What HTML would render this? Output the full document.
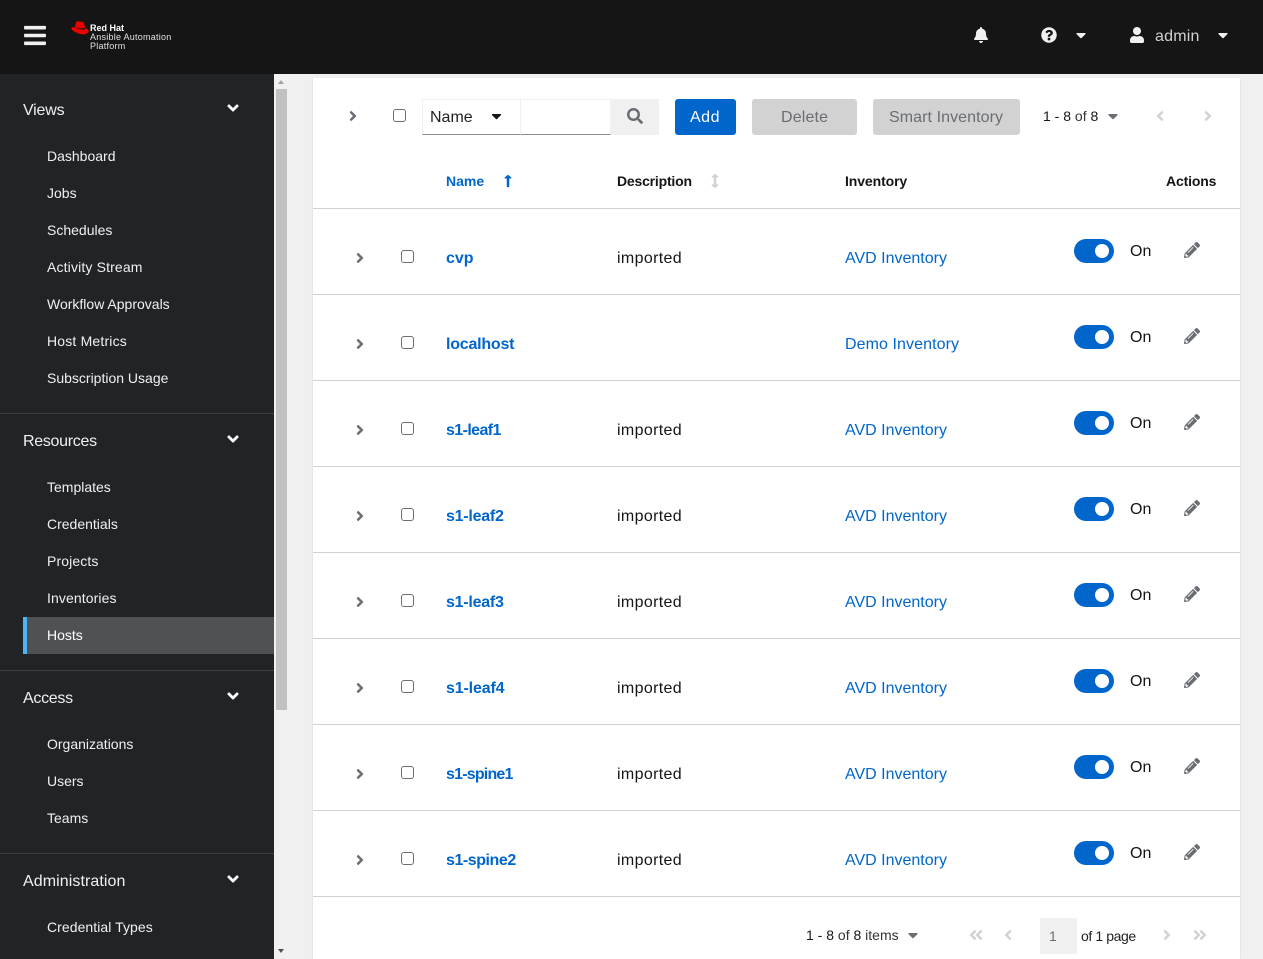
<!DOCTYPE html>
<html><head><meta charset="utf-8"><title>Hosts</title>
<style>
*{box-sizing:border-box}
html,body{margin:0;padding:0;width:1263px;height:959px;overflow:hidden;background:#f0f0f0;font-family:"Liberation Sans",sans-serif;color:#151515}
.t{position:absolute;white-space:nowrap;line-height:20px;font-size:16px}
.b{position:absolute}
svg.i{position:absolute;display:block;fill:currentColor}
a{color:#06c;text-decoration:none}
.s{color:#f0f0f0;font-size:14px;left:47px}
.h{color:#f0f0f0;font-size:16px;left:23px}
.l{font-weight:bold;color:#06c;left:446px}
.d{left:617px;letter-spacing:.35px}
.v{left:845px;color:#06c}
.on{left:1130px}
.line{position:absolute;left:313px;width:927px;height:1px;background:#d2d2d2}
.sd{position:absolute;left:0;width:274px;height:1px;background:#3c3f42}
.cb{position:absolute;width:13px;height:13px;border:1px solid #6a6e73;border-radius:3px;background:#fff}
.sw{position:absolute;left:1074px;width:40px;height:24px;border-radius:12px;background:#06c}
.sw i{position:absolute;left:21px;top:5px;width:14px;height:14px;border-radius:50%;background:#fff}
</style></head><body>
<svg width="0" height="0" style="position:absolute"><defs>
<symbol id="ar" viewBox="0 0 256 512"><path d="M224.3 273l-136 136c-9.4 9.4-24.6 9.4-33.9 0l-22.6-22.6c-9.4-9.4-9.4-24.6 0-33.9l96.4-96.4-96.4-96.4c-9.4-9.4-9.4-24.6 0-33.9L54.3 103c9.4-9.4 24.6-9.4 33.9 0l136 136c9.5 9.4 9.5 24.6.1 34z"/></symbol>
<symbol id="al" viewBox="0 0 256 512"><path d="M31.7 239l136-136c9.4-9.4 24.6-9.4 33.9 0l22.6 22.6c9.4 9.4 9.4 24.6 0 33.9L127.9 256l96.4 96.4c9.4 9.4 9.4 24.6 0 33.9L201.7 409c-9.4 9.4-24.6 9.4-33.9 0l-136-136c-9.5-9.4-9.5-24.6-.1-34z"/></symbol>
<symbol id="ad" viewBox="0 0 320 512"><path d="M143 352.3L7 216.3c-9.4-9.4-9.4-24.6 0-33.9l22.6-22.6c9.4-9.4 24.6-9.4 33.9 0l96.4 96.4 96.4-96.4c9.4-9.4 24.6-9.4 33.9 0l22.6 22.6c9.4 9.4 9.4 24.6 0 33.9l-136 136c-9.2 9.4-24.4 9.4-33.8 0z"/></symbol>
<symbol id="cd" viewBox="0 0 320 512"><path d="M31.3 192h257.3c17.8 0 26.7 21.5 14.1 34.1L174.1 354.8c-7.8 7.8-20.5 7.8-28.3 0L17.2 226.1C4.6 213.5 13.5 192 31.3 192z"/></symbol>
<symbol id="pen" viewBox="0 0 512 512"><path d="M497.9 142.1l-46.1 46.1c-4.7 4.7-12.3 4.7-17 0l-111-111c-4.7-4.7-4.7-12.3 0-17l46.1-46.1c18.7-18.7 49.1-18.7 67.9 0l60.1 60.1c18.8 18.7 18.8 49.1 0 67.9zM284.2 99.8L21.6 362.4.4 483.9c-2.9 16.4 11.4 30.6 27.8 27.8l121.5-21.3 262.6-262.6c4.7-4.7 4.7-12.3 0-17l-111-111c-4.8-4.7-12.4-4.7-17.1 0zM124.1 339.9c-5.5-5.5-5.5-14.3 0-19.8l154-154c5.5-5.5 14.3-5.5 19.8 0s5.5 14.3 0 19.8l-154 154c-5.5 5.5-14.3 5.5-19.8 0zM88 424h48v36.3l-64.5 11.3-31.1-31.1L51.7 376H88v48z"/></symbol>
<symbol id="dl" viewBox="0 0 448 512"><path d="M223.7 239l136-136c9.4-9.4 24.6-9.4 33.9 0l22.6 22.6c9.4 9.4 9.4 24.6 0 33.9L319.9 256l96.4 96.4c9.4 9.4 9.4 24.6 0 33.9L393.7 409c-9.4 9.4-24.6 9.4-33.9 0l-136-136c-9.5-9.4-9.5-24.6-.1-34zm-192 34l136 136c9.4 9.4 24.6 9.4 33.9 0l22.6-22.6c9.4-9.4 9.4-24.6 0-33.9L127.9 256l96.4-96.4c9.4-9.4 9.4-24.6 0-33.9L201.7 103c-9.4-9.4-24.6-9.4-33.9 0l-136 136c-9.5 9.4-9.5 24.6-.1 34z"/></symbol>
<symbol id="dr" viewBox="0 0 448 512"><path d="M224.3 273l-136 136c-9.4 9.4-24.6 9.4-33.9 0l-22.6-22.6c-9.4-9.4-9.4-24.6 0-33.9l96.4-96.4-96.4-96.4c-9.4-9.4-9.4-24.6 0-33.9L54.3 103c9.4-9.4 24.6-9.4 33.9 0l136 136c9.5 9.4 9.5 24.6.1 34zm192-34l-136-136c-9.4-9.4-24.6-9.4-33.9 0l-22.6 22.6c-9.4 9.4-9.4 24.6 0 33.9l96.4 96.4-96.4 96.4c-9.4 9.4-9.4 24.6 0 33.9l22.6 22.6c9.4 9.4 24.6 9.4 33.9 0l136-136c9.4-9.2 9.4-24.4 0-33.8z"/></symbol>
</defs></svg>

<!-- header -->
<div class="b" style="left:0;top:0;width:1263px;height:74px;background:#151515"></div>
<svg class="i" style="left:24px;top:23px;color:#f0f0f0" width="22" height="25" viewBox="0 0 448 512"><path d="M16 132h416c8.837 0 16-7.163 16-16V76c0-8.837-7.163-16-16-16H16C7.163 60 0 67.163 0 76v40c0 8.837 7.163 16 16 16zm0 160h416c8.837 0 16-7.163 16-16v-40c0-8.837-7.163-16-16-16H16c-8.837 0-16 7.163-16 16v40c0 8.837 7.163 16 16 16zm0 160h416c8.837 0 16-7.163 16-16v-40c0-8.837-7.163-16-16-16H16c-8.837 0-16 7.163-16 16v40c0 8.837 7.163 16 16 16z"/></svg>
<svg class="i" style="left:71px;top:20.500px" width="18" height="14" viewBox="0 0 18 14"><path fill="#e00" d="M5 1.500C5.500.5 6.500 0 8 .4 9 .7 9.500.8 10 .7 11.500.3 12.500.8 12.800 2L14.200 6.500C11 8 7 7.500 4 6z"/><path fill="#e00" d="M3.500 6C3 6 .5 6 .3 7.500.2 9 4 11 7 12.300 9 13.200 11.500 13.600 13.500 13.300 16 13 17.800 11.500 17.500 9.500 17.300 8.500 16 7.500 14.500 7 14.700 7.800 14 8.500 12.500 8.600 9.500 8.800 5.500 7.500 3.500 6z"/></svg>
<span class="t" style="left:90px;top:23px;font-size:9px;line-height:10px;font-weight:bold;color:#fff">Red Hat</span>
<span class="t" style="left:90px;top:32px;font-size:9px;line-height:10px;color:#e0e0e0;letter-spacing:.25px">Ansible Automation</span>
<span class="t" style="left:90px;top:41px;font-size:9px;line-height:10px;color:#e0e0e0;letter-spacing:.25px">Platform</span>

<svg class="i" style="left:974px;top:27px;color:#f0f0f0" width="14" height="16" viewBox="0 0 448 512"><path d="M224 512c35.32 0 63.97-28.65 63.97-64H160.030c0 35.35 28.65 64 63.970 64zm215.390-149.710c-19.320-20.760-55.470-51.990-55.470-154.290 0-77.700-54.480-139.900-127.940-155.160V32c0-17.670-14.320-32-31.980-32s-31.980 14.330-31.980 32v20.840C118.560 68.100 64.080 130.300 64.080 208c0 102.300-36.150 133.530-55.470 154.290-6 6.450-8.660 14.160-8.610 21.710.11 16.400 12.980 32 32.100 32h383.800c19.120 0 32-15.600 32.100-32 .05-7.550-2.610-15.270-8.610-21.710z"/></svg>
<svg class="i" style="left:1041px;top:27px;color:#f0f0f0" width="16" height="16" viewBox="0 0 512 512"><path d="M504 256c0 136.997-111.043 248-248 248S8 392.997 8 256C8 119.083 119.043 8 256 8s248 111.083 248 248zM262.655 90c-54.497 0-89.255 22.957-116.549 63.758-3.536 5.286-2.353 12.415 2.715 16.258l34.699 26.310c5.205 3.947 12.621 3.008 16.665-2.122 17.864-22.658 30.113-35.797 57.303-35.797 20.429 0 45.698 13.148 45.698 32.958 0 14.976-12.363 22.667-32.534 33.976C247.128 238.528 216 254.941 216 296v4c0 6.627 5.373 12 12 12h56c6.627 0 12-5.373 12-12v-1.333c0-28.462 83.186-29.647 83.186-106.667 0-58.002-60.165-102-116.531-102zM256 338c-25.365 0-46 20.635-46 46 0 25.364 20.635 46 46 46s46-20.636 46-46c0-25.365-20.635-46-46-46z"/></svg>
<svg class="i" style="left:1075px;top:27px;color:#f0f0f0" width="12" height="16"><use href="#cd"/></svg>
<svg class="i" style="left:1130px;top:27px;color:#f0f0f0" width="14" height="16" viewBox="0 0 448 512"><path d="M224 256c70.700 0 128-57.300 128-128S294.700 0 224 0 96 57.300 96 128s57.300 128 128 128zm89.600 32h-16.700c-22.200 10.200-46.900 16-72.900 16s-50.600-5.800-72.900-16h-16.700C60.200 288 0 348.200 0 422.400V464c0 26.500 21.500 48 48 48h352c26.500 0 48-21.500 48-48v-41.600c0-74.200-60.200-134.400-134.400-134.400z"/></svg>
<span class="t" style="left:1155px;top:27px;color:#d2d2d2;letter-spacing:.2px">admin</span>
<svg class="i" style="left:1217px;top:27px;color:#f0f0f0" width="12" height="16"><use href="#cd"/></svg>

<!-- sidebar -->
<div class="b" style="left:0;top:74px;width:274px;height:885px;background:#212427"></div>
<span class="t h" style="top:101px;letter-spacing:-.2px">Views</span>
<svg class="i" style="left:227px;top:99px;color:#fff" width="12" height="18"><use href="#ad"/></svg>
<span class="t s" style="top:146px">Dashboard</span>
<span class="t s" style="top:183px">Jobs</span>
<span class="t s" style="top:220px">Schedules</span>
<span class="t s" style="top:257px;letter-spacing:.15px">Activity Stream</span>
<span class="t s" style="top:294px">Workflow Approvals</span>
<span class="t s" style="top:331px;letter-spacing:.18px">Host Metrics</span>
<span class="t s" style="top:368px">Subscription Usage</span>
<div class="sd" style="top:413px"></div>
<span class="t h" style="top:432px;letter-spacing:-.3px">Resources</span>
<svg class="i" style="left:227px;top:430px;color:#fff" width="12" height="18"><use href="#ad"/></svg>
<span class="t s" style="top:477px">Templates</span>
<span class="t s" style="top:514px">Credentials</span>
<span class="t s" style="top:551px;letter-spacing:.12px">Projects</span>
<span class="t s" style="top:588px;letter-spacing:.1px">Inventories</span>
<div class="b" style="left:23px;top:617px;width:251px;height:37px;background:#4f5255;border-left:4px solid #4fb4f6"></div>
<span class="t s" style="top:625px;color:#fff">Hosts</span>
<div class="sd" style="top:670px"></div>
<span class="t h" style="top:689px;letter-spacing:-.3px">Access</span>
<svg class="i" style="left:227px;top:687px;color:#fff" width="12" height="18"><use href="#ad"/></svg>
<span class="t s" style="top:734px">Organizations</span>
<span class="t s" style="top:771px">Users</span>
<span class="t s" style="top:808px">Teams</span>
<div class="sd" style="top:853px"></div>
<span class="t h" style="top:872px;letter-spacing:.08px">Administration</span>
<svg class="i" style="left:227px;top:870px;color:#fff" width="12" height="18"><use href="#ad"/></svg>
<span class="t s" style="top:917px;letter-spacing:.06px">Credential Types</span>

<!-- scrollbar -->
<div class="b" style="left:274px;top:74px;width:14px;height:885px;background:#f1f1f1"></div>
<div class="b" style="left:276px;top:89px;width:11px;height:621px;background:#c1c1c1"></div>
<div class="b" style="left:278px;top:80px;width:0;height:0;border-left:3.500px solid transparent;border-right:3.500px solid transparent;border-bottom:4px solid #a3a3a3"></div>
<div class="b" style="left:278px;top:949px;width:0;height:0;border-left:3.500px solid transparent;border-right:3.500px solid transparent;border-top:4px solid #505050"></div>

<!-- card -->
<div class="b" style="left:313px;top:78px;width:927px;height:881px;background:#fff;box-shadow:0 1px 2px rgba(3,3,3,.12)"></div>

<!-- toolbar -->
<svg class="i" style="left:349px;top:108px;color:#6a6e73" width="8" height="16"><use href="#ar"/></svg>
<div class="cb" style="left:393px;top:109px"></div>
<div class="b" style="left:422px;top:99px;width:99px;height:36px;background:#fff;border:1px solid #f0f0f0;border-bottom:1px solid #8a8d90"></div>
<span class="t" style="left:430px;top:108px;color:#222">Name</span>
<svg class="i" style="left:491px;top:108px;color:#151515" width="11" height="16"><use href="#cd"/></svg>
<div class="b" style="left:520px;top:99px;width:91px;height:36px;background:#fff;border:1px solid #f0f0f0;border-bottom:1px solid #8a8d90"></div>
<div class="b" style="left:611px;top:99px;width:48px;height:36px;background:#f0f0f0"></div>
<svg class="i" style="left:627px;top:108px;color:#6a6e73" width="16" height="16" viewBox="0 0 512 512"><path d="M505 442.700L405.300 343c-4.500-4.500-10.600-7-17-7H372c27.600-35.300 44-79.700 44-128C416 93.100 322.900 0 208 0S0 93.100 0 208s93.100 208 208 208c48.300 0 92.700-16.400 128-44v16.300c0 6.400 2.500 12.500 7 17l99.700 99.700c9.400 9.400 24.600 9.400 33.900 0l28.300-28.300c9.400-9.400 9.400-24.600.1-34zM208 336c-70.700 0-128-57.200-128-128 0-70.700 57.200-128 128-128 70.700 0 128 57.200 128 128 0 70.700-57.200 128-128 128z"/></svg>
<div class="b" style="left:675px;top:99px;width:61px;height:36px;background:#06c;border-radius:3px"></div>
<span class="t" style="left:690px;top:108px;color:#fff;letter-spacing:.5px">Add</span>
<div class="b" style="left:752px;top:99px;width:105px;height:36px;background:#d2d2d2;border-radius:3px"></div>
<span class="t" style="left:781px;top:108px;color:#6a6e73;letter-spacing:.15px">Delete</span>
<div class="b" style="left:873px;top:99px;width:147px;height:36px;background:#d2d2d2;border-radius:3px"></div>
<span class="t" style="left:889px;top:108px;color:#6a6e73;letter-spacing:.08px">Smart Inventory</span>
<span class="t" style="left:1043px;top:106px;font-size:14px">1 - 8 <span style="color:#333">of</span> 8</span>
<svg class="i" style="left:1108px;top:108px;color:#6a6e73" width="10" height="16"><use href="#cd"/></svg>
<svg class="i" style="left:1156px;top:108px;color:#d2d2d2" width="8" height="16"><use href="#al"/></svg>
<svg class="i" style="left:1204px;top:108px;color:#d2d2d2" width="8" height="16"><use href="#ar"/></svg>

<!-- table head -->
<span class="t" style="left:446px;top:171px;font-size:14px;font-weight:bold;color:#06c">Name</span>
<svg class="i" style="left:504px;top:174px;color:#06c" width="8" height="14" viewBox="0 0 256 512" preserveAspectRatio="none"><path d="M88 166.059V468c0 6.627 5.373 12 12 12h56c6.627 0 12-5.373 12-12V166.059h46.059c21.382 0 32.090-25.851 16.971-40.971l-86.059-86.059c-9.373-9.373-24.569-9.373-33.941 0l-86.059 86.059c-15.119 15.119-4.411 40.971 16.971 40.971H88z"/></svg>
<span class="t" style="left:617px;top:171px;font-size:14px;font-weight:bold;letter-spacing:-.2px">Description</span>
<svg class="i" style="left:711px;top:174px;color:#d2d2d2" width="8" height="14" viewBox="0 0 256 512" preserveAspectRatio="none"><path d="M214.059 377.941H168V134.059h46.059c21.382 0 32.090-25.851 16.971-40.971L144.971 7.029c-9.373-9.373-24.569-9.373-33.941 0L24.971 93.088c-15.119 15.119-4.411 40.971 16.971 40.971H88v243.882H41.941c-21.382 0-32.090 25.851-16.971 40.971l86.059 86.059c9.373 9.373 24.569 9.373 33.941 0l86.059-86.059c15.120-15.119 4.412-40.971-16.970-40.971z"/></svg>
<span class="t" style="left:845px;top:171px;font-size:14px;font-weight:bold;letter-spacing:-.1px">Inventory</span>
<span class="t" style="left:1166px;top:171px;font-size:14px;font-weight:bold;letter-spacing:-.15px">Actions</span>
<div class="line" style="top:208px"></div>

<!-- row 1 -->
<svg class="i" style="left:356px;top:250px;color:#6a6e73" width="8" height="16"><use href="#ar"/></svg>
<div class="cb" style="left:401px;top:250px"></div>
<span class="t l" style="top:249px">cvp</span><span class="t d" style="top:249px">imported</span><span class="t v" style="top:249px">AVD Inventory</span>
<div class="sw" style="top:239px"><i></i></div><span class="t on" style="top:242px">On</span>
<svg class="i" style="left:1184px;top:242px;color:#6a6e73" width="16" height="16"><use href="#pen"/></svg>
<div class="line" style="top:294px"></div>
<!-- row 2 -->
<svg class="i" style="left:356px;top:336px;color:#6a6e73" width="8" height="16"><use href="#ar"/></svg>
<div class="cb" style="left:401px;top:336px"></div>
<span class="t l" style="top:335px;letter-spacing:-.22px">localhost</span><span class="t v" style="top:335px;letter-spacing:.08px">Demo Inventory</span>
<div class="sw" style="top:325px"><i></i></div><span class="t on" style="top:328px">On</span>
<svg class="i" style="left:1184px;top:328px;color:#6a6e73" width="16" height="16"><use href="#pen"/></svg>
<div class="line" style="top:380px"></div>
<!-- row 3 -->
<svg class="i" style="left:356px;top:422px;color:#6a6e73" width="8" height="16"><use href="#ar"/></svg>
<div class="cb" style="left:401px;top:422px"></div>
<span class="t l" style="top:421px;letter-spacing:-.6px">s1-leaf1</span><span class="t d" style="top:421px">imported</span><span class="t v" style="top:421px">AVD Inventory</span>
<div class="sw" style="top:411px"><i></i></div><span class="t on" style="top:414px">On</span>
<svg class="i" style="left:1184px;top:414px;color:#6a6e73" width="16" height="16"><use href="#pen"/></svg>
<div class="line" style="top:466px"></div>
<!-- row 4 -->
<svg class="i" style="left:356px;top:508px;color:#6a6e73" width="8" height="16"><use href="#ar"/></svg>
<div class="cb" style="left:401px;top:508px"></div>
<span class="t l" style="top:507px;letter-spacing:-.25px">s1-leaf2</span><span class="t d" style="top:507px">imported</span><span class="t v" style="top:507px">AVD Inventory</span>
<div class="sw" style="top:497px"><i></i></div><span class="t on" style="top:500px">On</span>
<svg class="i" style="left:1184px;top:500px;color:#6a6e73" width="16" height="16"><use href="#pen"/></svg>
<div class="line" style="top:552px"></div>
<!-- row 5 -->
<svg class="i" style="left:356px;top:594px;color:#6a6e73" width="8" height="16"><use href="#ar"/></svg>
<div class="cb" style="left:401px;top:594px"></div>
<span class="t l" style="top:593px;letter-spacing:-.25px">s1-leaf3</span><span class="t d" style="top:593px">imported</span><span class="t v" style="top:593px">AVD Inventory</span>
<div class="sw" style="top:583px"><i></i></div><span class="t on" style="top:586px">On</span>
<svg class="i" style="left:1184px;top:586px;color:#6a6e73" width="16" height="16"><use href="#pen"/></svg>
<div class="line" style="top:638px"></div>
<!-- row 6 -->
<svg class="i" style="left:356px;top:680px;color:#6a6e73" width="8" height="16"><use href="#ar"/></svg>
<div class="cb" style="left:401px;top:680px"></div>
<span class="t l" style="top:679px;letter-spacing:-.15px">s1-leaf4</span><span class="t d" style="top:679px">imported</span><span class="t v" style="top:679px">AVD Inventory</span>
<div class="sw" style="top:669px"><i></i></div><span class="t on" style="top:672px">On</span>
<svg class="i" style="left:1184px;top:672px;color:#6a6e73" width="16" height="16"><use href="#pen"/></svg>
<div class="line" style="top:724px"></div>
<!-- row 7 -->
<svg class="i" style="left:356px;top:766px;color:#6a6e73" width="8" height="16"><use href="#ar"/></svg>
<div class="cb" style="left:401px;top:766px"></div>
<span class="t l" style="top:765px;letter-spacing:-.8px">s1-spine1</span><span class="t d" style="top:765px">imported</span><span class="t v" style="top:765px">AVD Inventory</span>
<div class="sw" style="top:755px"><i></i></div><span class="t on" style="top:758px">On</span>
<svg class="i" style="left:1184px;top:758px;color:#6a6e73" width="16" height="16"><use href="#pen"/></svg>
<div class="line" style="top:810px"></div>
<!-- row 8 -->
<svg class="i" style="left:356px;top:852px;color:#6a6e73" width="8" height="16"><use href="#ar"/></svg>
<div class="cb" style="left:401px;top:852px"></div>
<span class="t l" style="top:851px;letter-spacing:-.45px">s1-spine2</span><span class="t d" style="top:851px">imported</span><span class="t v" style="top:851px">AVD Inventory</span>
<div class="sw" style="top:841px"><i></i></div><span class="t on" style="top:844px">On</span>
<svg class="i" style="left:1184px;top:844px;color:#6a6e73" width="16" height="16"><use href="#pen"/></svg>
<div class="line" style="top:896px"></div>

<!-- footer -->
<span class="t" style="left:806px;top:925px;font-size:14px">1 - 8 <span style="color:#333">of</span> 8 <span style="color:#333">items</span></span>
<svg class="i" style="left:908px;top:927px;color:#6a6e73" width="10" height="16"><use href="#cd"/></svg>
<svg class="i" style="left:969px;top:927px;color:#d2d2d2" width="14" height="16"><use href="#dl"/></svg>
<svg class="i" style="left:1004px;top:927px;color:#d2d2d2" width="8" height="16"><use href="#al"/></svg>
<div class="b" style="left:1040px;top:918px;width:37px;height:36px;background:#f0f0f0"></div>
<span class="t" style="left:1049px;top:926px;font-size:14px;color:#6a6e73">1</span>
<span class="t" style="left:1081px;top:926px;font-size:14px;color:#222;letter-spacing:-.4px">of 1 page</span>
<svg class="i" style="left:1163px;top:927px;color:#d2d2d2" width="8" height="16"><use href="#ar"/></svg>
<svg class="i" style="left:1193px;top:927px;color:#d2d2d2" width="14" height="16"><use href="#dr"/></svg>
</body></html>
